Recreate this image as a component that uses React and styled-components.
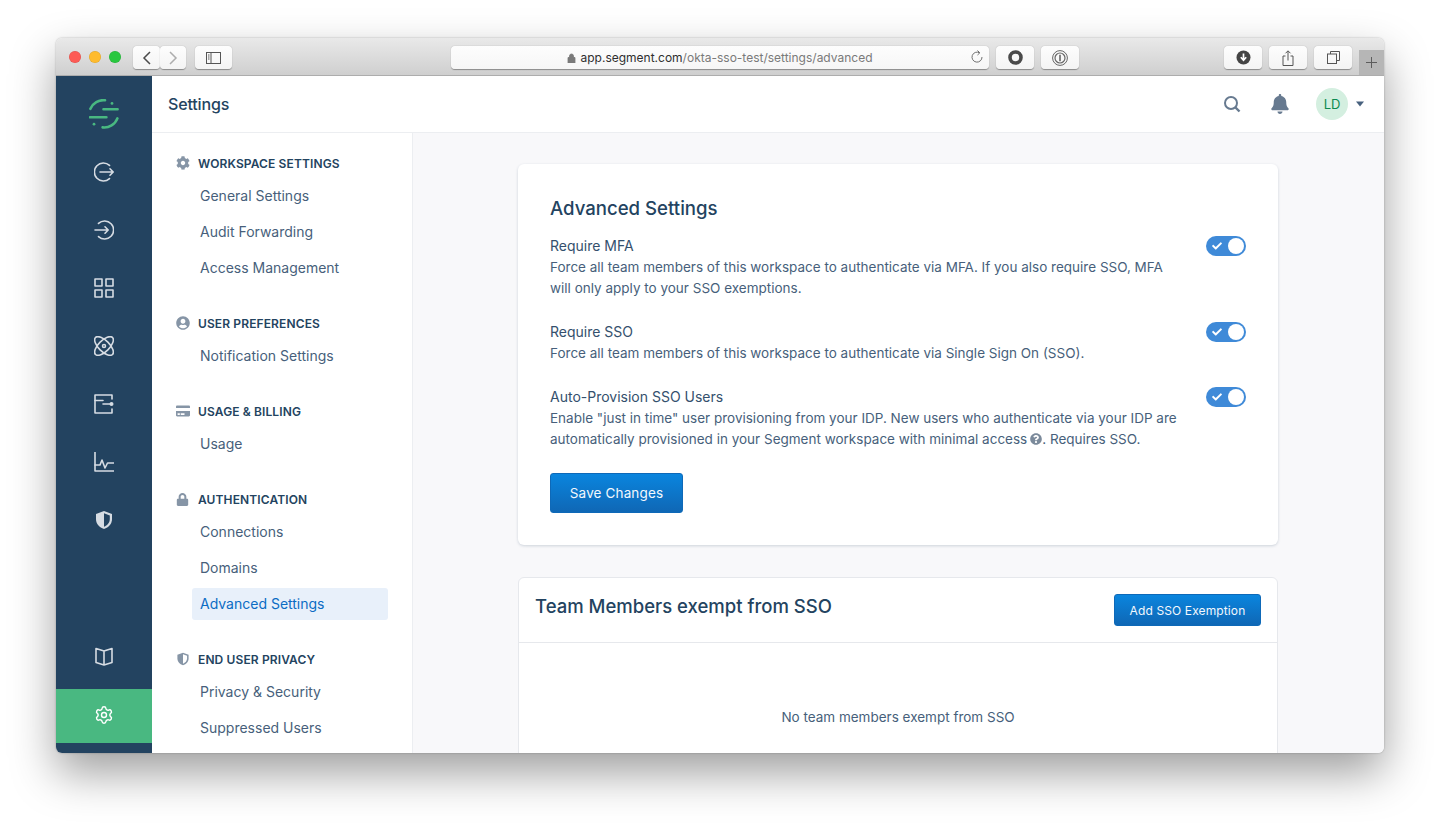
import React from 'react';
import styled, { createGlobalStyle } from 'styled-components';
import { FaBell, FaCheck, FaCog, FaCreditCard, FaLock, FaQuestionCircle, FaUserCircle } from 'react-icons/fa';
import { Settings as GearIcon } from 'lucide-react';

const navy = '#234360';
const slate = '#475f7b';

const GlobalStyle = createGlobalStyle`
  html, body {
    margin: 0;
    background: #fff;
    font-family: Inter, "Liberation Sans", sans-serif;
    -webkit-font-smoothing: antialiased;
  }
  * { box-sizing: border-box; }
`;

const Stage = styled.div`
  height: 827px;
  padding: 38px 56px 0;
  overflow: hidden;
`;

const Window = styled.div`
  width: 1328px;
  height: 715px;
  display: flex;
  flex-direction: column;
  border-radius: 6px;
  overflow: hidden;
  box-shadow: 0 20px 45px rgba(0, 0, 0, 0.38), 0 0 2px rgba(0, 0, 0, 0.3);
`;

/* browser chrome */
const TitleBar = styled.div`
  height: 38px;
  flex: none;
  display: flex;
  align-items: flex-start;
  padding: 8px 0 0 13px;
  background: linear-gradient(#e9e9e9, #cfcfcf);
  border-bottom: 1px solid #adadad;
  position: relative;
`;

const Lights = styled.div`
  display: flex;
  gap: 8px;
  margin: 5px 12px 0 0;
`;

const Light = styled.span`
  width: 12px;
  height: 12px;
  border-radius: 50%;
  background: ${p => p.$color};
  box-shadow: inset 0 0 0 0.5px rgba(0, 0, 0, 0.12);
`;

const ChromeButton = styled.div`
  width: ${p => p.$w || 38}px;
  height: 23px;
  flex: none;
  margin-left: ${p => p.$ml || 0}px;
  display: flex;
  align-items: center;
  justify-content: center;
  background: linear-gradient(#fdfdfd, #f4f4f4);
  border-radius: 4px;
  box-shadow: 0 0.5px 1px rgba(0, 0, 0, 0.35);
`;

const UrlBar = styled.div`
  width: 538px;
  height: 23px;
  flex: none;
  margin-left: 219px;
  display: flex;
  align-items: center;
  justify-content: center;
  gap: 4px;
  position: relative;
  background: linear-gradient(#fdfdfd, #f6f6f6);
  border-radius: 4px;
  box-shadow: 0 0.5px 1px rgba(0, 0, 0, 0.35);
  font-size: 12px;
  color: #7a7a7a;
  white-space: nowrap;
  b {
    font-weight: 400;
    color: #2f2f2f;
  }
`;

const Reload = styled.svg`
  position: absolute;
  right: 5px;
  top: 4px;
`;

const NewTab = styled.div`
  position: absolute;
  right: 0;
  bottom: 0;
  width: 25px;
  height: 25px;
  display: flex;
  align-items: center;
  justify-content: center;
  background: #b6b6b6;
`;

/* app */
const Body = styled.div`
  flex: 1;
  min-height: 0;
  display: flex;
`;

const Rail = styled.nav`
  width: 96px;
  flex: none;
  display: flex;
  flex-direction: column;
  padding: 9px 0 10px;
  background: ${navy};
  color: #d6dce3;
`;

const RailItem = styled.div`
  height: ${p => (p.$active ? 54 : 58)}px;
  flex: none;
  display: flex;
  align-items: center;
  justify-content: center;
  margin-top: ${p => (p.$push ? 'auto' : p.$active ? '3px' : '0')};
  padding-bottom: ${p => (p.$active ? 2 : 0)}px;
  background: ${p => (p.$active ? '#49b881' : 'transparent')};
  color: ${p => (p.$active ? '#fff' : 'inherit')};
`;

const Main = styled.div`
  flex: 1;
  min-width: 0;
  display: flex;
  flex-direction: column;
  background: #f8f8fa;
`;

const Header = styled.header`
  height: 57px;
  flex: none;
  display: flex;
  align-items: center;
  padding: 0 19px 1px 16px;
  background: #fff;
  border-bottom: 1px solid #eceef1;
`;

const PageName = styled.h1`
  margin: 0;
  font-size: 16px;
  font-weight: 500;
  letter-spacing: -0.01em;
  color: ${navy};
  flex: 1;
`;

const HeaderIcon = styled.div`
  display: flex;
  color: #677a90;
  margin-right: ${p => p.$mr}px;
`;

const Avatar = styled.div`
  width: 32px;
  height: 32px;
  display: flex;
  align-items: center;
  justify-content: center;
  border-radius: 50%;
  background: #d4efe0;
  color: #0b8a4f;
  font-size: 13px;
  margin-right: 7px;
`;

const Columns = styled.div`
  flex: 1;
  min-height: 0;
  display: flex;
`;

const Sidebar = styled.aside`
  width: 261px;
  flex: none;
  padding: 20px 24px 0;
  background: #fff;
  border-right: 1px solid #eceef1;
  overflow: hidden;
`;

const Group = styled.section`
  margin-bottom: 29px;
`;

const GroupTitle = styled.div`
  height: 20px;
  display: flex;
  align-items: center;
  margin-bottom: 7px;
  font-size: 12px;
  font-weight: 600;
  letter-spacing: 0.01em;
  text-transform: uppercase;
  color: ${navy};
`;

const GroupIcon = styled.span`
  width: 22px;
  flex: none;
  display: flex;
  color: #8695a6;
`;

const NavItem = styled.a`
  display: flex;
  align-items: center;
  height: 32px;
  margin: 0 0 4px 16px;
  padding: 0 0 2px 8px;
  border-radius: 3px;
  font-size: 14px;
  color: ${p => (p.$active ? '#0b6cc4' : slate)};
  background: ${p => (p.$active ? '#e8f0fa' : 'transparent')};
  &:last-child {
    margin-bottom: 0;
  }
`;

const Content = styled.main`
  flex: 1;
  min-width: 0;
  padding: 31px 1px 0 0;
  overflow: hidden;
`;

const Card = styled.div`
  width: 760px;
  margin: 0 auto 32px;
  padding: 32px;
  background: #fff;
  border-radius: 6px;
  box-shadow: 0 1px 3px rgba(35, 67, 96, 0.2);
`;

const CardTitle = styled.h2`
  margin: 0 0 15px;
  font-size: 18.6px;
  line-height: 24px;
  font-weight: 500;
  color: ${navy};
`;

const SettingRow = styled.div`
  display: grid;
  grid-template-columns: 632px 1fr;
  justify-content: space-between;
  margin-bottom: 22px;
  font-size: 13.5px;
  line-height: 21px;
  color: ${slate};
  &:nth-last-child(2) {
    margin-bottom: 23px;
  }
`;

const SettingName = styled.div`
  margin-bottom: 1px;
  font-size: 14px;
  color: #34506d;
`;

const HelpIcon = styled(FaQuestionCircle)`
  vertical-align: -1px;
  margin: 0 0 0 3px;
  color: #7b8a9b;
`;

const Toggle = styled.div`
  justify-self: end;
  width: 40px;
  height: 20px;
  margin-top: 1px;
  display: flex;
  align-items: center;
  justify-content: space-between;
  padding: 0 2px 0 6px;
  border-radius: 10px;
  background: #3f8ad8;
  color: #fff;
`;

const Knob = styled.span`
  width: 16px;
  height: 16px;
  border-radius: 50%;
  background: #fff;
`;

const Button = styled.button`
  display: block;
  height: ${p => (p.$small ? 32 : 40)}px;
  width: ${p => (p.$small ? 147 : 133)}px;
  border: 1px solid #0e69b8;
  border-radius: 3px;
  background: linear-gradient(#0a85de, #0f67b5);
  color: #f3f8fd;
  font-family: inherit;
  font-size: ${p => (p.$small ? 12 : 13.5)}px;
  font-weight: 400;
  letter-spacing: 0.01em;
`;

const Panel = styled.div`
  width: 760px;
  height: 300px;
  margin: 0 auto;
  background: #fff;
  border: 1px solid #e6e8ec;
  border-radius: 6px;
`;

const PanelHeader = styled.div`
  height: 65px;
  display: flex;
  align-items: center;
  justify-content: space-between;
  padding: 0 16px;
  border-bottom: 1px solid #e6e8ec;
`;

const PanelTitle = styled.h2`
  margin: 0 0 8px;
  font-size: 18.5px;
  font-weight: 500;
  color: ${navy};
`;

const EmptyText = styled.p`
  margin: 64px 0 0;
  font-size: 13.5px;
  line-height: 21px;
  text-align: center;
  color: ${slate};
`;

/* drawings */
const Line = ({ size = 20, children }) => (
  <svg width={size} height={size} viewBox="0 0 20 20" fill="none" stroke="currentColor" strokeWidth="1.6" strokeLinecap="round" strokeLinejoin="round">
    {children}
  </svg>
);

const Logo = () => (
  <svg width="30" height="30" viewBox="0 0 30 30" fill="none" stroke="#49b881" strokeWidth="2.6" strokeLinecap="round">
    <path d="M14.500 10.300H28.600M1 18.300H17.400" />
    <path d="M1.400 9.800A14 14 0 0 1 16 1.300M28.400 19.400A14 14 0 0 1 13.600 28.400" />
    <circle cx="23" cy="4.400" r="1.400" fill="#49b881" stroke="none" />
    <circle cx="5" cy="25.200" r="1.400" fill="#49b881" stroke="none" />
  </svg>
);

const railIcons = [
  <><path d="M15.500 3.400A9 9 0 1 0 15.500 16.600" /><path d="M6 10h13.200M16 6.800l3.200 3.200-3.200 3.200" /></>,
  <><path d="M4.500 3.400A9 9 0 1 1 4.500 16.600" /><path d="M1 10h13.200M11 6.800l3.200 3.200-3.200 3.200" /></>,
  <><rect x="1" y="1" width="7" height="7" /><rect x="12" y="1" width="7" height="7" /><rect x="1" y="12" width="7" height="7" /><rect x="12" y="12" width="7" height="7" /></>,
  <><ellipse cx="10" cy="10" rx="12" ry="5.500" transform="rotate(45 10 10)" /><ellipse cx="10" cy="10" rx="12" ry="5.500" transform="rotate(-45 10 10)" /><circle cx="10" cy="10" r="1.500" /></>,
  <><path d="M18 5V1H1v18h17v-4" /><path d="M1 6.500h8M9 10h7" /><circle cx="17.500" cy="10" r="2" fill="currentColor" stroke="none" /></>,
  <><path d="M1 0v19h19" /><path d="M1 13h5l2-5 3 8 2.500-5H20" /></>,
];

const Shield = ({ size = 20 }) => (
  <svg width={size} height={size} viewBox="0 0 20 20">
    <path d="M10 1 2 4v5c0 5 3.400 8.500 8 10 4.600-1.500 8-5 8-10V4z" fill="currentColor" />
    <path d="M10 3.200v13.600c3.200-1.300 5.800-4 5.800-7.800V5.500z" fill={size === 20 ? '#234360' : '#fff'} />
  </svg>
);

const Book = () => (
  <Line>
    <path d="M10 4 2 1.500V15.500L10 18l8-2.500V1.500zM10 4v14" />
  </Line>
);

const sections = [
  { title: 'Workspace Settings', icon: <FaCog size={14} />, items: ['General Settings', 'Audit Forwarding', 'Access Management'] },
  { title: 'User Preferences', icon: <FaUserCircle size={14} />, items: ['Notification Settings'] },
  { title: 'Usage & Billing', icon: <FaCreditCard size={14} />, items: ['Usage'] },
  { title: 'Authentication', icon: <FaLock size={13} />, items: ['Connections', 'Domains', 'Advanced Settings'] },
  { title: 'End User Privacy', icon: <Shield size={14} />, items: ['Privacy & Security', 'Suppressed Users'] },
];

const Switch = () => (
  <Toggle>
    <FaCheck size={10} />
    <Knob />
  </Toggle>
);

const App = () => (
  <>
    <GlobalStyle />
    <Stage>
      <Window>
        <TitleBar>
          <Lights>
            <Light $color="#fd5b55" />
            <Light $color="#febb2d" />
            <Light $color="#29c73f" />
          </Lights>
          <ChromeButton $w={27}>
            <svg width="10" height="16" viewBox="0 0 10 16" fill="none" stroke="#4a4a4a" strokeWidth="1.500"><path d="M8 2 2 8l6 6" /></svg>
          </ChromeButton>
          <ChromeButton $w={26}>
            <svg width="10" height="16" viewBox="0 0 10 16" fill="none" stroke="#adadad" strokeWidth="1.500"><path d="m2 2 6 6-6 6" /></svg>
          </ChromeButton>
          <ChromeButton $w={37} $ml={9}>
            <svg width="15" height="12" viewBox="0 0 15 12" fill="none" stroke="#555" strokeWidth="1"><rect x=".5" y=".5" width="14" height="11" /><path d="M5 .5v11M2 3h1.500M2 5h1.500M2 7h1.500" /></svg>
          </ChromeButton>
          <UrlBar>
            <svg width="9" height="10" viewBox="0 0 9 10" fill="#7a7a7a"><path d="M1 4.500h7V10H1zM2.500 4.500V3a2 2 0 0 1 4 0v1.500" stroke="#7a7a7a" strokeWidth=".8" /></svg>
            <span><b>app.segment.com</b>/okta-sso-test/settings/advanced</span>
            <Reload width="14" height="14" viewBox="0 0 14 14" fill="none" stroke="#6f6f6f" strokeWidth="1"><path d="M9.500 2.800A5 5 0 1 0 12 7M7.500 .5l2.300 2.300L7.500 5" /></Reload>
          </UrlBar>
          <ChromeButton $ml={7}>
            <svg width="15" height="15" viewBox="0 0 15 15" fill="none" stroke="#4a4a4a" strokeWidth="3.600"><circle cx="7.500" cy="7.500" r="5.500" /></svg>
          </ChromeButton>
          <ChromeButton $ml={7}>
            <svg width="16" height="16" viewBox="0 0 16 16" fill="none" stroke="#666" strokeWidth="1"><circle cx="8" cy="8" r="7.400" /><circle cx="8" cy="8" r="5" strokeWidth="1.200" /><path d="M8 4.800v6.400" strokeWidth="1.600" /></svg>
          </ChromeButton>
          <ChromeButton $ml={145}>
            <svg width="15" height="15" viewBox="0 0 15 15"><circle cx="7.500" cy="7.500" r="7" fill="#444" /><path d="M7.500 3.500v6M4.800 7.200l2.700 3 2.700-3" fill="none" stroke="#fff" strokeWidth="1.700" /></svg>
          </ChromeButton>
          <ChromeButton $ml={7}>
            <svg width="12" height="16" viewBox="0 0 12 16" fill="none" stroke="#555" strokeWidth="1"><path d="M3.500 6H1v9.500h10V6H8.500M6 10.500V1M3.500 3.300 6 .8l2.500 2.500" /></svg>
          </ChromeButton>
          <ChromeButton $ml={7}>
            <svg width="13" height="13" viewBox="0 0 13 13" fill="none" stroke="#555" strokeWidth="1"><rect x=".5" y="3" width="9" height="9.500" /><path d="M3.500 3V.5h9v9H9.500" /></svg>
          </ChromeButton>
          <NewTab>
            <svg width="13" height="13" viewBox="0 0 13 13" stroke="#5c5c5c" strokeWidth="1"><path d="M6.500 1v11M1 6.500h11" /></svg>
          </NewTab>
        </TitleBar>
        <Body>
          <Rail>
            <RailItem><Logo /></RailItem>
            {railIcons.map((icon, i) => (
              <RailItem key={i}><Line>{icon}</Line></RailItem>
            ))}
            <RailItem><Shield /></RailItem>
            <RailItem $push><Book /></RailItem>
            <RailItem $active><GearIcon size={20} strokeWidth={1.700} /></RailItem>
          </Rail>
          <Main>
            <Header>
              <PageName>Settings</PageName>
              <HeaderIcon $mr={29}>
                <svg width="18" height="18" viewBox="0 0 18 18" fill="none" stroke="currentColor"><circle cx="8" cy="8" r="6" strokeWidth="2" /><path d="m12.500 12.500 4 4" strokeWidth="2.400" /></svg>
              </HeaderIcon>
              <HeaderIcon $mr={26}><FaBell size={20} /></HeaderIcon>
              <Avatar>LD</Avatar>
              <HeaderIcon $mr={0}>
                <svg width="10" height="6" viewBox="0 0 10 6" fill="#47617e"><path d="M1 .5h8L5 5.500z" /></svg>
              </HeaderIcon>
            </Header>
            <Columns>
              <Sidebar>
                {sections.map(section => (
                  <Group key={section.title}>
                    <GroupTitle>
                      <GroupIcon>{section.icon}</GroupIcon>
                      {section.title}
                    </GroupTitle>
                    {section.items.map(item => (
                      <NavItem key={item} $active={item === 'Advanced Settings'}>{item}</NavItem>
                    ))}
                  </Group>
                ))}
              </Sidebar>
              <Content>
                <Card>
                  <CardTitle>Advanced Settings</CardTitle>
                  <SettingRow>
                    <div>
                      <SettingName>Require MFA</SettingName>
                      Force all team members of this workspace to authenticate via MFA. If you also require SSO, MFA will only apply to your SSO exemptions.
                    </div>
                    <Switch />
                  </SettingRow>
                  <SettingRow>
                    <div>
                      <SettingName>Require SSO</SettingName>
                      Force all team members of this workspace to authenticate via Single Sign On (SSO).
                    </div>
                    <Switch />
                  </SettingRow>
                  <SettingRow>
                    <div>
                      <SettingName>Auto-Provision SSO Users</SettingName>
                      Enable "just in time" user provisioning from your IDP. New users who authenticate via your IDP are automatically provisioned in your Segment workspace with minimal access<HelpIcon size={12} />. Requires SSO.
                    </div>
                    <Switch />
                  </SettingRow>
                  <Button>Save Changes</Button>
                </Card>
                <Panel>
                  <PanelHeader>
                    <PanelTitle>Team Members exempt from SSO</PanelTitle>
                    <Button $small>Add SSO Exemption</Button>
                  </PanelHeader>
                  <EmptyText>No team members exempt from SSO</EmptyText>
                </Panel>
              </Content>
            </Columns>
          </Main>
        </Body>
      </Window>
    </Stage>
  </>
);

export default App;
